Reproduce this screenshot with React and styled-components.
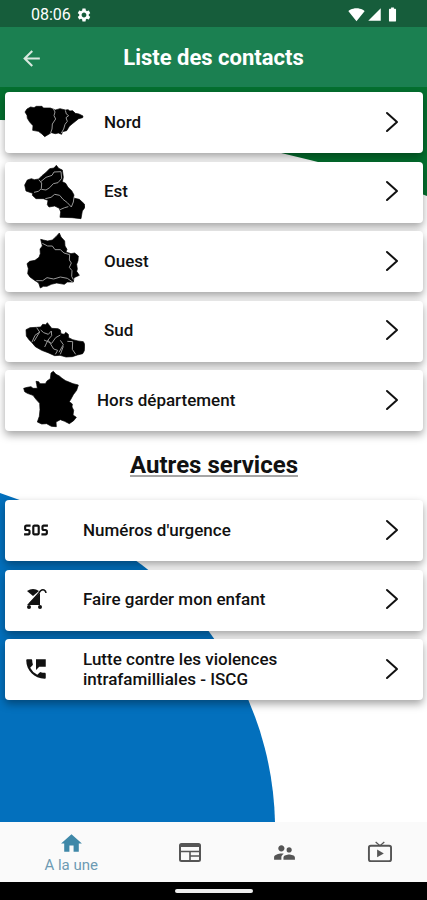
import React from "react";
import styled, { createGlobalStyle } from "styled-components";
import {
  MdArrowBack,
  MdBatteryFull,
  MdHome,
  MdPermPhoneMsg,
  MdSettings,
  MdSignalCellular4Bar,
  MdSignalWifi4Bar,
  MdSos,
  MdSupervisorAccount,
} from "react-icons/md";

const GlobalStyle = createGlobalStyle`
  *, *::before, *::after { box-sizing: border-box; }
  body {
    margin: 0;
    background: #fff;
    font-family: Roboto, "Liberation Sans", sans-serif;
    color: #111;
  }
`;

const Screen = styled.div`
  display: flex;
  flex-direction: column;
  min-height: 100vh;
`;

const StatusBar = styled.div`
  display: flex;
  align-items: center;
  justify-content: space-between;
  height: 27px;
  padding: 2px 26px 0 31px;
  background: #165d3b;
  color: #fff;
  font-size: 16px;
`;

const StatusGroup = styled.div`
  display: flex;
  align-items: center;
  gap: ${(p) => p.$gap}px;
`;

const Header = styled.header`
  display: grid;
  grid-template-columns: 62px 1fr 62px;
  align-items: center;
  height: 60px;
  padding-top: 2px;
  background: #1b8051;
`;

const BackButton = styled.button`
  display: flex;
  justify-content: center;
  padding: 0;
  border: 0;
  background: none;
  color: #d9e8df;
`;

const Title = styled.h1`
  margin: 0;
  color: #fff;
  font-size: 22px;
  font-weight: 700;
  line-height: 28px;
  text-align: center;
`;

const Content = styled.main`
  position: relative;
  flex: 1;
  padding: 5px 4px 20px 5px;
  overflow: hidden;
`;

const GreenWave = styled.svg`
  position: absolute;
  z-index: -1;
  top: 0;
  left: 0;
  width: 100%;
  height: 109px;
`;

const BlueDisc = styled.svg`
  position: absolute;
  z-index: -1;
  bottom: 0;
  left: 0;
  width: 276px;
  height: 330px;
`;

const CardList = styled.ul`
  display: flex;
  flex-direction: column;
  justify-content: space-between;
  min-height: ${(p) => p.$height}px;
  margin: 0;
  padding: 0;
  list-style: none;
`;

const Card = styled.button`
  display: flex;
  align-items: center;
  width: 100%;
  height: 61px;
  padding: 0 24px 2px 18px;
  border: 0;
  border-radius: 4px;
  background: #fff;
  box-shadow: 0 4px 8px rgba(0, 0, 0, 0.36);
  color: #111;
  font: 500 17px/20px Roboto, "Liberation Sans", sans-serif;
  text-align: left;
`;

const CardIcon = styled.span`
  display: flex;
  flex: none;
  width: ${(p) => p.$width}px;
`;

const CardLabel = styled.span`
  flex: 1;
  max-width: ${(p) => (p.$narrow ? "220px" : "none")};
  margin-right: auto;
`;

const MapShape = styled.svg`
  width: 62px;
  height: 61px;
  fill: #000;
  stroke: #000;
  stroke-width: 2;
  stroke-linejoin: round;
`;

const Border = styled.path`
  fill: none;
  stroke: #999;
  stroke-width: 3;
`;

const ChevronSvg = styled.svg`
  flex: none;
  width: 14px;
  height: 22px;
  fill: none;
  stroke: #111;
  stroke-width: 2;
  stroke-linecap: round;
  stroke-linejoin: round;
`;

const SectionTitle = styled.h2`
  margin: 20px 0 21px;
  font-size: 24px;
  font-weight: 700;
  line-height: 28px;
  text-align: center;
  text-decoration: underline;
  text-decoration-color: #a5a5a5;
  text-decoration-thickness: 2px;
  text-underline-offset: 2px;
  text-decoration-skip-ink: none;
`;

const TabBar = styled.nav`
  display: flex;
  height: 60px;
  padding-top: 1px;
  background: #fafafa;
`;

const Tab = styled.button`
  display: flex;
  flex: ${(p) => (p.$active ? 3 : 2)} 1 0;
  flex-direction: column;
  align-items: center;
  justify-content: center;
  padding: 0;
  border: 0;
  background: none;
  color: ${(p) => (p.$active ? "#3f88a8" : "#555")};
  font: 400 15px/18px Roboto, "Liberation Sans", sans-serif;
`;

const TabLabel = styled.span`
  color: #6d9ab3;
`;

const GestureBar = styled.div`
  display: flex;
  align-items: center;
  justify-content: center;
  height: 18px;
  background: #000;

  &::after {
    content: "";
    width: 78px;
    height: 4px;
    border-radius: 2px;
    background: #eee;
  }
`;

const regions = [
  {
    name: "Nord",
    viewBox: "69 6 186 183",
    outline:
      "M75 69L81 60L92 54L102 56L109 52L119 52L126 52L130 57L151 57L166 63L180 59L196 63L205 62L209 66L218 65L226 73L237 75L249 81L248 86L236 89L216 105L208 112L200 125L187 128L185 136L175 132L166 134L154 131L144 137L134 143L126 135L115 127L98 124L99 110L89 99L82 88L81 79Z",
    borders:
      "M160 59L165 69L162 80L167 90L157 105L156 120L151 134M196 64L199 75L206 80L198 86L202 97L195 106L191 120L184 132",
  },
  {
    name: "Est",
    viewBox: "69 213 186 183",
    outline:
      "M74 285L82 270L94 266L103 269L116 267L126 257L137 248L149 236L162 234L169 226L176 235L187 240L190 262L187 275L197 280L204 292L215 302L222 315L220 324L238 328L253 342L255 352L247 363L243 386L216 383L180 382L182 366L178 355L164 348L147 351L142 344L144 331L130 326L108 326L97 316L98 310L78 303Z",
    borders:
      "M116 269L125 279L124 296L115 304L102 307M121 276L138 262L156 256L162 246L183 245L185 265L174 278L160 281L149 293L138 300L124 298M136 326L153 322L164 313L179 316L189 328L202 338L214 351L220 336L222 322M180 359L194 353L205 350",
  },
  {
    name: "Ouest",
    viewBox: "69 18 186 183",
    outline:
      "M122 46L130 48L143 51L157 48L168 38L178 27L183 39L194 51L195 66L201 76L198 84L213 89L224 87L235 96L234 110L230 121L232 135L230 142L238 154L222 161L220 174L202 174L193 181L170 177L154 181L141 187L130 187L121 192L116 177L101 167L90 159L83 149L85 134L81 119L89 112L105 109L117 100L121 89L120 75L127 66Z",
    borders:
      "M127 58L143 66L157 66L165 77L181 77L192 87L209 92L208 108L214 117L208 130L216 140L215 157L220 167M109 170L128 170L141 161L161 165L181 159L202 163L219 175",
  },
  {
    name: "Sud",
    viewBox: "69 226 186 183",
    outline:
      "M78 315L90 309L109 308L122 307L128 299L137 300L142 294L149 303L155 311L174 312L181 316L183 327L193 329L197 323L205 329L206 339L218 345L234 349L250 351L254 359L253 378L248 387L232 391L217 396L198 397L180 392L164 393L144 384L125 377L106 366L96 354L87 345L79 334Z",
    borders:
      "M110 309L119 322L105 332L96 352M122 316L131 324L145 329L154 319L155 333L144 346L134 367M132 346L155 356L167 339L181 331M145 347L161 373L173 377L166 389M181 347L190 360L177 383M190 365L181 389M202 350L218 351L217 374L227 389M119 322L102 350",
  },
  {
    name: "Hors département",
    narrowIcon: true,
    viewBox: "69 29 186 183",
    outline:
      "M71 87L82 84L93 82L99 87L112 87L110 75L108 66L116 67L120 73L136 73L141 65L151 58L153 41L160 36L168 45L178 50L186 57L197 64L209 69L219 73L235 77L230 93L220 106L213 119L208 127L217 134L216 143L221 153L219 167L229 174L221 184L208 193L194 186L181 181L168 188L169 202L154 201L140 193L125 194L112 188L118 171L120 151L119 132L108 120L99 108L82 102L74 97Z",
    borders: "",
  },
];

function StrollerIcon({ size }) {
  return (
    <svg width={size} height={size} viewBox="0 0 26 26" aria-hidden="true">
      <path d="M4 5Q10 1 16 5L10 10Z" fill="#111" />
      <path d="M17 7V19H4Z" fill="#111" />
      <path d="M6 18L16 7Q18 3 21 4Q23 5 23 7" fill="none" stroke="#111" strokeWidth="1.5" />
      <circle cx="6" cy="21" r="2" fill="#111" />
      <circle cx="17" cy="21" r="2" fill="#111" />
    </svg>
  );
}

function NewsIcon({ size }) {
  return (
    <svg width={size} height={size} viewBox="0 0 25 25" fill="none" stroke="currentColor" aria-hidden="true">
      <rect x="3" y="4" width="20" height="17" rx="1.5" strokeWidth="2" />
      <path d="M3 5.5H23" strokeWidth="3" />
      <path d="M3 11.5H23M13 11.5V20M13 16H23" strokeWidth="1.6" />
    </svg>
  );
}

function TvIcon({ size }) {
  return (
    <svg width={size} height={size} viewBox="0 0 26 26" fill="none" stroke="currentColor" aria-hidden="true">
      <rect x="2" y="6" width="23" height="16" rx="2" strokeWidth="2" />
      <path d="M9 2L13.500 6L18 2" strokeWidth="1.300" />
      <path d="M10.500 10V18L17.500 14Z" fill="currentColor" stroke="none" />
    </svg>
  );
}

const services = [
  { name: "Numéros d'urgence", Icon: MdSos },
  { name: "Faire garder mon enfant", Icon: StrollerIcon },
  { name: "Lutte contre les violences intrafamilliales - ISCG", Icon: MdPermPhoneMsg, narrow: true },
];

const tabs = [
  { name: "A la une", Icon: MdHome, active: true },
  { name: "Actualités", Icon: NewsIcon },
  { name: "Contacts", Icon: MdSupervisorAccount },
  { name: "Vidéos", Icon: TvIcon },
];

function Chevron() {
  return (
    <ChevronSvg viewBox="0 0 14 22" aria-hidden="true">
      <path d="M2 2L12 11L2 20" />
    </ChevronSvg>
  );
}

export default function App() {
  return (
    <>
      <GlobalStyle />
      <Screen>
        <StatusBar>
          <StatusGroup $gap={5}>
            08:06 <MdSettings size={16} />
          </StatusGroup>
          <StatusGroup $gap={2}>
            <MdSignalWifi4Bar size={17} />
            <MdSignalCellular4Bar size={15} />
            <MdBatteryFull size={17} />
          </StatusGroup>
        </StatusBar>
        <Header>
          <BackButton aria-label="Retour">
            <MdArrowBack size={25} />
          </BackButton>
          <Title>Liste des contacts</Title>
        </Header>
        <Content>
          <GreenWave viewBox="0 0 427 109" preserveAspectRatio="none" aria-hidden="true">
            <path d="M0 0H427V109Q370 87 310 73L277 65Q150 33 0 33Z" fill="#04702f" />
          </GreenWave>
          <BlueDisc viewBox="0 0 276 330" aria-hidden="true">
            <path d="M0 1Q81 28 142 73A330 330 0 0 1 275 330H0Z" fill="#0370bd" />
          </BlueDisc>
          <CardList $height={339}>
            {regions.map((r) => (
              <li key={r.name}>
                <Card>
                  <CardIcon $width={r.narrowIcon ? 74 : 81}>
                    <MapShape viewBox={r.viewBox} aria-hidden="true">
                      <path d={r.outline} />
                      <Border d={r.borders} />
                    </MapShape>
                  </CardIcon>
                  <CardLabel>{r.name}</CardLabel>
                  <Chevron />
                </Card>
              </li>
            ))}
          </CardList>
          <SectionTitle>Autres services</SectionTitle>
          <CardList $height={200}>
            {services.map(({ name, Icon, narrow }) => (
              <li key={name}>
                <Card>
                  <CardIcon $width={60}>
                    <Icon size={26} />
                  </CardIcon>
                  <CardLabel $narrow={narrow}>{name}</CardLabel>
                  <Chevron />
                </Card>
              </li>
            ))}
          </CardList>
        </Content>
        <TabBar>
          {tabs.map(({ name, Icon, active }) => (
            <Tab key={name} $active={active} aria-label={name}>
              <Icon size={25} />
              {active && <TabLabel>{name}</TabLabel>}
            </Tab>
          ))}
        </TabBar>
        <GestureBar />
      </Screen>
    </>
  );
}
